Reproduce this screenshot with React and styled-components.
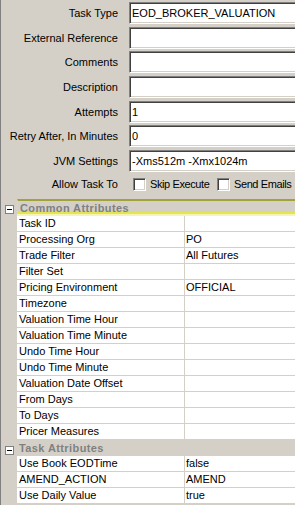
import React from "react";
import styled, { createGlobalStyle } from "styled-components";

const GlobalStyle = createGlobalStyle`
  html, body {
    margin: 0;
    padding: 0;
    background: #d4d0c8;
    overflow: hidden;
  }
  body {
    font-family: "Liberation Sans", Arial, sans-serif;
    font-size: 11px;
    color: #000;
  }
`;

const Page = styled.div`
  width: 295px;
  height: 505px;
  box-sizing: border-box;
  border-left: 1px solid #808080;
  background: #d4d0c8;
  overflow: hidden;
  display: flex;
  flex-direction: column;
`;

const FormPanel = styled.div`
  flex: none;
  height: 199px;
  box-sizing: border-box;
  padding-top: 2px;
  display: grid;
  grid-template-columns: 117px 1fr;
  grid-template-rows: repeat(7, 22px) 19px;
  row-gap: 2.67px;
  column-gap: 11px;
  align-content: start;
`;

const FieldLabel = styled.div`
  align-self: center;
  text-align: right;
  white-space: nowrap;
`;

const sunken = `
  box-sizing: border-box;
  background: #fff;
  border: 1px solid;
  border-color: #808080 #fff #fff #808080;
  box-shadow: inset 1px 1px 0 #404040, inset -1px -1px 0 #d4d0c8;
`;

const TextBox = styled.input`
  ${sunken}
  width: calc(100% + 6px);
  height: 22px;
  margin: 0;
  padding: 0 0 0 2px;
  font: inherit;
  color: #000;
  outline: none;
`;

const CheckRow = styled.div`
  display: flex;
  align-items: center;
  padding-left: 4px;
  white-space: nowrap;
`;

const CheckOption = styled.label`
  display: flex;
  align-items: center;
  flex: none;
  letter-spacing: -0.4px;
  width: ${(p) => (p.$width ? `${p.$width}px` : "auto")};
`;

const CheckBox = styled.span`
  ${sunken}
  width: 13px;
  height: 13px;
  flex: none;
  margin-right: 4px;
`;

const Tree = styled.div`
  flex: 1;
  display: flex;
  flex-direction: column;
`;

const GroupRow = styled.div`
  display: grid;
  grid-template-columns: 16px 1fr;
  height: ${(p) => (p.$focused ? 17 : 16)}px;
  background: #d4d0c8;
  flex: none;
`;

const Expander = styled.span`
  position: relative;
  box-sizing: border-box;
  width: 9px;
  height: 9px;
  margin: 6px 0 0 4px;
  border: 1px solid #808080;
  background: #fff;
  &::after {
    content: "";
    position: absolute;
    left: 1px;
    top: 3px;
    width: 5px;
    height: 1px;
    background: #000;
  }
`;

const GroupTitle = styled.div`
  box-sizing: border-box;
  height: ${(p) => (p.$focused ? 15 : 16)}px;
  padding-left: 2px;
  line-height: ${(p) => (p.$focused ? 14 : 17)}px;
  font-weight: bold;
  letter-spacing: 0.4px;
  color: #808080;
  white-space: nowrap;
  ${(p) =>
    p.$focused &&
    `
    border-top: 2px solid #a2a23c;
    border-left: 1px solid #e4e44c;
    border-bottom: 2px solid #e4e44c;
    box-shadow: 0 2px 0 #f4f4b6;
  `}
`;

const PropRow = styled.div`
  display: grid;
  grid-template-columns: 16px 168px 1fr;
  height: 16px;
  flex: none;
`;

const Gutter = styled.span`
  background: #d4d0c8;
`;

const Cell = styled.div`
  box-sizing: border-box;
  background: #fff;
  border-bottom: 1px solid #d4d0c8;
  border-right: ${(p) => (p.$name ? "1px solid #d4d0c8" : "none")};
  padding-left: ${(p) => (p.$name ? 2 : 1)}px;
  line-height: 15px;
  white-space: nowrap;
  overflow: hidden;
`;

const fields = [
  ["Task Type", "EOD_BROKER_VALUATION"],
  ["External Reference", ""],
  ["Comments", ""],
  ["Description", ""],
  ["Attempts", "1"],
  ["Retry After, In Minutes", "0"],
  ["JVM Settings", "-Xms512m -Xmx1024m"],
];

const groups = [
  {
    title: "Common Attributes",
    focused: true,
    rows: [
      ["Task ID", ""],
      ["Processing Org", "PO"],
      ["Trade Filter", "All Futures"],
      ["Filter Set", ""],
      ["Pricing Environment", "OFFICIAL"],
      ["Timezone", ""],
      ["Valuation Time Hour", ""],
      ["Valuation Time Minute", ""],
      ["Undo Time Hour", ""],
      ["Undo Time Minute", ""],
      ["Valuation Date Offset", ""],
      ["From Days", ""],
      ["To Days", ""],
      ["Pricer Measures", ""],
    ],
  },
  {
    title: "Task Attributes",
    rows: [
      ["Use Book EODTime", "false"],
      ["AMEND_ACTION", "AMEND"],
      ["Use Daily Value", "true"],
    ],
  },
];

export default function App() {
  return (
    <>
      <GlobalStyle />
      <Page>
        <FormPanel>
          {fields.map(([label, value]) => (
            <React.Fragment key={label}>
              <FieldLabel>{label}</FieldLabel>
              <TextBox readOnly defaultValue={value} />
            </React.Fragment>
          ))}
          <FieldLabel>Allow Task To</FieldLabel>
          <CheckRow>
            <CheckOption $width={84}>
              <CheckBox />
              Skip Execute
            </CheckOption>
            <CheckOption>
              <CheckBox />
              Send Emails
            </CheckOption>
          </CheckRow>
        </FormPanel>
        <Tree>
          {groups.map((g) => (
            <React.Fragment key={g.title}>
              <GroupRow $focused={g.focused}>
                <Expander />
                <GroupTitle $focused={g.focused}>{g.title}</GroupTitle>
              </GroupRow>
              {g.rows.map(([name, value]) => (
                <PropRow key={name}>
                  <Gutter />
                  <Cell $name>{name}</Cell>
                  <Cell>{value}</Cell>
                </PropRow>
              ))}
            </React.Fragment>
          ))}
        </Tree>
      </Page>
    </>
  );
}
